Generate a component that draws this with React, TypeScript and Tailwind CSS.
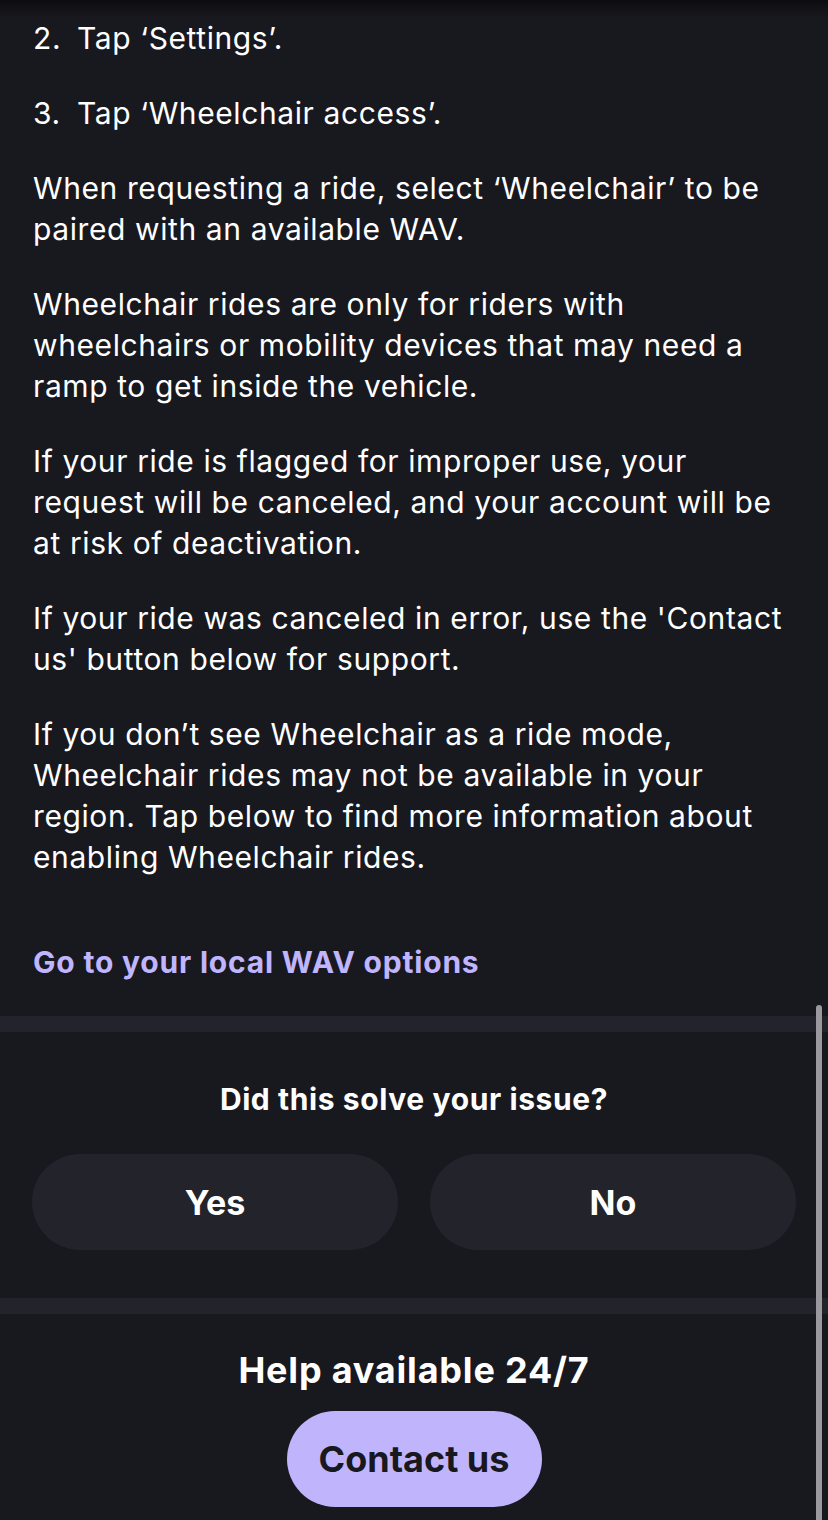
import React from "react";

const P = ({ lines }: { lines: React.ReactNode[] }) => (
  <p className="text-[30px] leading-[41px] tracking-[0.6px] text-white whitespace-nowrap">
    {lines.map((l, i) => (
      <React.Fragment key={i}>
        {i > 0 && <br />}
        {l}
      </React.Fragment>
    ))}
  </p>
);

const Step = ({ n, text }: { n: string; text: string }) => (
  <P
    lines={[
      <React.Fragment key="s">
        <span className="inline-block w-[44px]">{n}</span>
        {text}
      </React.Fragment>,
    ]}
  />
);

export default function App() {
  return (
    <div className="relative w-[828px] h-[1520px] overflow-hidden bg-[#18181f] font-['Inter',sans-serif]">
      <div className="absolute top-0 left-0 right-0 h-[18px] bg-gradient-to-b from-[#0c0c10] to-transparent" />
      <div className="px-[33px] pt-[18px] flex flex-col gap-[34px]">
        <Step n="2." text="Tap ‘Settings’." />
        <Step n="3." text="Tap ‘Wheelchair access’." />
        <P lines={["When requesting a ride, select ‘Wheelchair’ to be", "paired with an available WAV."]} />
        <P
          lines={[
            "Wheelchair rides are only for riders with",
            "wheelchairs or mobility devices that may need a",
            "ramp to get inside the vehicle.",
          ]}
        />
        <P
          lines={[
            "If your ride is flagged for improper use, your",
            "request will be canceled, and your account will be",
            "at risk of deactivation.",
          ]}
        />
        <P lines={["If your ride was canceled in error, use the 'Contact", "us' button below for support."]} />
        <P
          lines={[
            "If you don’t see Wheelchair as a ride mode,",
            "Wheelchair rides may not be available in your",
            "region. Tap below to find more information about",
            "enabling Wheelchair rides.",
          ]}
        />
      </div>
      <div className="px-[33px] mt-[64px] h-[40px] flex items-center">
        <span className="text-[30px] font-bold tracking-[0.8px] text-[#c0b5ff]">Go to your local WAV options</span>
      </div>
      <div className="mt-[34px] h-[16px] bg-[#23232b]" />
      <div className="flex flex-col items-center pt-[47px] pb-[48px]">
        <div className="text-[30px] font-bold tracking-[0.6px] text-white h-[40px] flex items-center">
          Did this solve your issue?
        </div>
        <div className="mt-[35px] w-full px-[32px] grid grid-cols-2 gap-[32px]">
          <button className="h-[96px] rounded-full bg-[#23232b] text-white text-[34px] font-bold">Yes</button>
          <button className="h-[96px] rounded-full bg-[#23232b] text-white text-[34px] font-bold">No</button>
        </div>
      </div>
      <div className="h-[16px] bg-[#23232b]" />
      <div className="flex flex-col items-center pt-[34px]">
        <div className="text-[36px] font-bold tracking-[0.8px] text-white h-[44px] flex items-center">
          Help available 24/7
        </div>
        <button className="mt-[19px] w-[255px] h-[96px] rounded-full bg-[#c0b5fd] text-[#18181f] text-[36px] font-bold">
          Contact us
        </button>
      </div>
      <div className="absolute right-[6px] top-[1005px] w-[6px] h-[520px] rounded-t-full bg-[#9a9a9e]" />
    </div>
  );
}
